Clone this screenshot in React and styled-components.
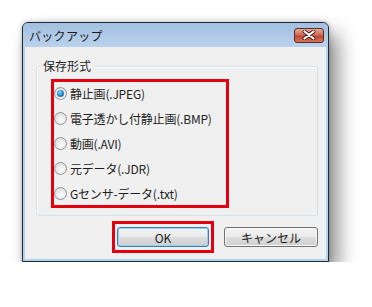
import React from 'react';
import styled, { createGlobalStyle } from 'styled-components';

const Global = createGlobalStyle`
  html, body {
    margin: 0;
    background: #fff;
  }
  body {
    font-family: "Noto Sans CJK JP", "Noto Sans", sans-serif;
  }
`

const Page = styled.div`
  padding: 22px 0 0 22px;
`

// ventana estilo Windows 7 basico
const Ventana = styled.div`
  width: 307px;
  height: 240px;
  box-sizing: border-box;
  display: flex;
  flex-direction: column;
  border: 1px solid #1f2a36;
  border-radius: 6px 6px 0 0;
  background: #b9d1ea;
  box-shadow: 0 0 5px rgba(0, 0, 0, 0.25), 9px 12px 20px rgba(0, 0, 0, 0.45);
`

const BarraTitulo = styled.div`
  height: 24px;
  flex: none;
  display: flex;
  align-items: center;
  justify-content: space-between;
  padding: 0 4px 0 6px;
  border-radius: 5px 5px 0 0;
  background: linear-gradient(#a3c0e1, #bad2ec);
`

const Titulo = styled.span`
  font-size: 12px;
  color: #1a1a1a;
  letter-spacing: 0.3px;
`

const Cerrar = styled.div`
  width: 30px;
  height: 15px;
  box-sizing: border-box;
  border: 1px solid #5c2a24;
  border-radius: 3px;
  display: flex;
  align-items: center;
  justify-content: center;
  background: linear-gradient(#e3a99b 0%, #cf6a57 45%, #bd4632 55%, #d7775a 100%);
`

const Cliente = styled.div`
  flex: 1;
  display: flex;
  flex-direction: column;
  margin: 0 1px 1px;
  border: 1px solid #a9d6ef;
  border-top: none;
  background: #f0f0f0;
  padding: 0 8px 0 11px;
`

const Grupo = styled.fieldset`
  margin: 11px 0 0;
  padding: 0 0 7px;
  border: 1px solid #d5dfe5;
  border-radius: 3px;
  box-shadow: inset 1px 1px 0 #fff;
`

const Leyenda = styled.legend`
  margin-left: 4px;
  padding: 0 2px;
  font-size: 12px;
  line-height: 16px;
  color: #1e1e1e;
`

const Marco = styled.div`
  border: 3px solid #e5000f;
  box-sizing: border-box;
  width: 178px;
  height: 129px;
  margin: 5px 0 0 14px;
  display: flex;
  flex-direction: column;
  gap: 2.6px;
`

const Opcion = styled.label`
  height: 23px;
  display: flex;
  align-items: center;
  gap: 3px;
  font-size: 12px;
  letter-spacing: -0.2px;
  color: #1e1e1e;
  white-space: nowrap;
`

const Radio = styled.span`
  width: 13px;
  height: 13px;
  box-sizing: border-box;
  border-radius: 50%;
  border: 1px solid #8f9396;
  flex: none;
  display: flex;
  align-items: center;
  justify-content: center;
  background: radial-gradient(circle at 60% 65%, #fdfdfd 0%, #e4e4e4 60%, #cfcfcf 100%);

  &::after {
    content: '';
    width: 7px;
    height: 7px;
    border-radius: 50%;
    display: ${({ marcado }) => (marcado ? 'block' : 'none')};
    background: radial-gradient(circle at 40% 35%, #9fd8f8 0%, #2a8fd0 45%, #0b4f8a 100%);
  }
`

const Botonera = styled.div`
  display: flex;
  justify-content: flex-end;
  align-items: center;
  gap: 10px;
  margin-top: 5px;
`

const MarcoBoton = styled.div`
  border: 3px solid #e5000f;
  padding: 3px 2px;
  display: flex;
`

const Boton = styled.button`
  width: ${({ ancho }) => ancho}px;
  height: 20px;
  box-sizing: border-box;
  padding: 0;
  border-radius: 3px;
  border: 1px solid ${({ defecto }) => (defecto ? '#3d7bad' : '#707070')};
  box-shadow: inset 0 0 0 1px ${({ defecto }) => (defecto ? '#98d4f0' : '#fbfbfb')};
  background: linear-gradient(#f2f2f2 0%, #ebebeb 48%, #dddddd 52%, #cfcfcf 100%);
  font-family: "Noto Sans CJK JP", "Noto Sans", sans-serif;
  font-size: 12px;
  color: #1a1a1a;
`

const opciones = [
  '静止画(.JPEG)',
  '電子透かし付静止画(.BMP)',
  '動画(.AVI)',
  '元データ(.JDR)',
  'Gセンサ-データ(.txt)',
]

const App = () => {
  const [sel, setSel] = React.useState(0)

  return (
    <Page>
      <Global />
      <Ventana>
        <BarraTitulo>
          <Titulo>バックアップ</Titulo>
          <Cerrar>
            <svg width="14" height="10" viewBox="0 0 14 10">
              <path d="M2.5 1.5 L11.5 8.5 M11.5 1.5 L2.5 8.5" stroke="#4a1c16" strokeWidth="4" strokeLinecap="round" />
              <path d="M2.5 1.5 L11.5 8.5 M11.5 1.5 L2.5 8.5" stroke="#fff" strokeWidth="2.2" strokeLinecap="round" />
            </svg>
          </Cerrar>
        </BarraTitulo>
        <Cliente>
          <Grupo>
            <Leyenda>保存形式</Leyenda>
            <Marco>
              {opciones.map((texto, i) => (
                <Opcion key={texto} onClick={() => setSel(i)}>
                  <Radio marcado={sel === i} />
                  {texto}
                </Opcion>
              ))}
            </Marco>
          </Grupo>
          <Botonera>
            <MarcoBoton>
              <Boton ancho={92} defecto>OK</Boton>
            </MarcoBoton>
            <Boton ancho={94}>キャンセル</Boton>
          </Botonera>
        </Cliente>
      </Ventana>
    </Page>
  )
}

export default App;
